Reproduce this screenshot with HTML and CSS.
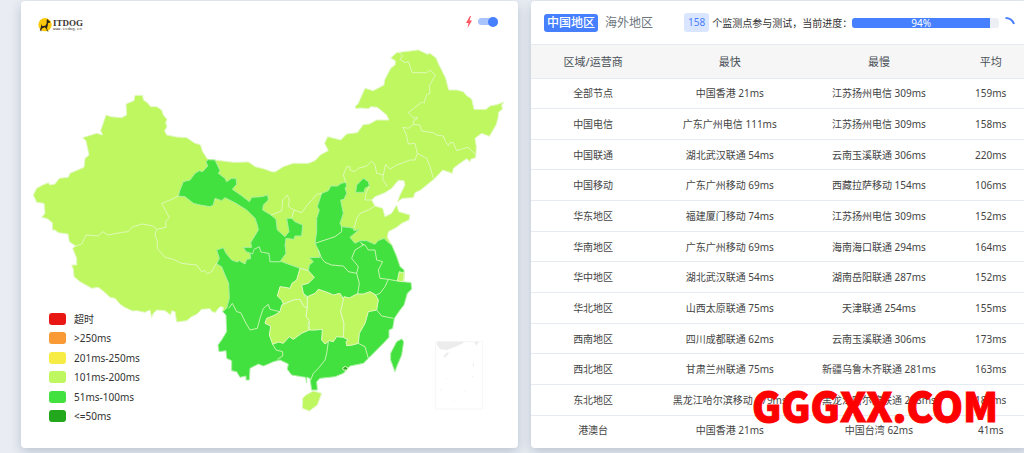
FILE: index.html
```html
<!DOCTYPE html>
<html lang="zh-CN">
<head>
<meta charset="utf-8">
<title>ITDOG</title>
<link rel="stylesheet" href="styles.css">
</head>
<body>
<main class="page">
  <section class="card map-card">
    <header class="map-head">
      <a class="logo" href="#">
        <svg class="logo-mark" viewBox="0 0 42 42" aria-hidden="true">
          <circle cx="21" cy="20" r="20" fill="#fbc90c"/>
          <path d="M4 41l3-9 2-6 1-9 2 7 10-1 4-7 0-9 3-4 2 4 6 4-2 3-5 1-1 9-2 6 2 8 4 2h-6l-2-8-5-4-7 3-3 4v5l-3-1v-5z" fill="#2b2317"/>
        </svg>
        <span class="logo-text"><span class="logo-name">ITDOG</span><span class="logo-url">www.itdog.cn</span></span>
      </a>
      <label class="fast">
        <svg class="bolt" viewBox="0 0 8 12" aria-hidden="true"><path d="M5 0L1 7h2.500L2.500 12 7 4.500H4.500L6 0z" fill="#ff5560"/></svg>
        <input class="switch" type="checkbox" checked aria-label="快速">
      </label>
    </header>
    <svg class="map" viewBox="63 126 1491 1125" role="img" aria-label="中国地图">
      <path class="ok" d="M405 286H428L430 300 442 308 452 320 470 320 485 330 490 345 501 358 497 368 501 380 494 392 500 405 530 411 560 413 585 430 601 434 608 455 623 478 645 480 700 487 745 486 760 496 765 500 790 506 815 515 825 516 850 500 880 490H925L945 482 962 464 985 452 974 430 983 410 1022 420 1040 402 1072 398 1090 374 1108 372 1130 360H1167L1160 345 1132 322 1112 320 1106 326 1082 324 1068 326 1066 318 1074 312 1095 265 1120 272 1152 255 1154 240 1172 205 1185 195 1186 182 1172 174 1190 158 1255 150 1283 163 1290 160 1308 174 1317 195 1325 210 1337 235 1346 270 1370 270 1390 275 1400 287 1415 297 1422 328H1458L1470 318 1490 314 1512 306 1505 315 1507 328 1496 336 1494 355 1488 375 1478 392 1468 409 1445 400 1425 415 1429 440 1427 473 1412 478 1410 485 1400 476 1380 490 1360 505 1357 520 1328 510 1305 535 1262 570 1245 578 1240 593 1208 595 1193 605 1200 585 1215 555 1212 542 1195 541 1175 565 1155 578 1125 590 1115 600 1125 618 1148 625 1155 650 1175 640 1190 615 1196 635 1230 645 1227 660 1205 670 1190 682 1165 695 1162 712 1175 735 1190 770 1200 800 1213 812V840L1150 900 1000 1010 800 960 668 935 670 922 660 920 645 938 635 934 630 926 605 928 590 943 575 950 560 962 530 966 525 935 515 932 512 945 495 932 470 930 460 940 455 953 450 930 435 937 410 932 398 933 385 927 372 921 360 912 345 895 330 892 312 875 295 862 275 865 240 845 222 830 220 808 215 795 230 795V775L218 745 227 738 208 725 204 702 175 698 165 690 157 690V668L142 656 125 652 135 640 132 610 110 607 100 585 110 565 128 555 145 548 150 555 165 552 178 535 205 532 210 520 252 502 255 475 267 465 258 422 248 413 290 400 308 405 302 392 318 345 332 350 365 353 380 345 378 312 402 302z"/>
      <path class="good" d="M650 750L670 743 678 760 695 780 712 786 718 782 735 792 740 778 752 776 750 762 762 748 778 740 783 756 807 760 810 785 845 785 900 805 925 812 928 795 940 785 928 773 960 772 955 750 945 730 950 695V655L958 630 952 620 965 580 985 572 992 558 1012 558 1024 550 1037 547 1040 560 1035 563 1040 580 1032 598 1022 600 1030 640 1020 670 1025 680 1045 682 1060 685 1062 692 1078 688 1064 700 1050 712 1065 730 1080 722 1100 722 1125 733 1134 722 1152 715 1162 725 1175 735 1190 770 1200 800 1212 810 1208 845 1233 848 1235 867 1222 880 1212 915 1200 930 1183 955 1178 985 1167 990V1012L1150 1030 1115 1065 1105 1075 1090 1090 1050 1098 1030 1120 1005 1130 960 1135 950 1145 952 1170H935L930 1135 920 1132V1148L917 1132 905 1130 875 1125 862 1108 865 1092 840 1080 820 1085 805 1092 790 1098 775 1092 750 1105 748 1140H738V1128L720 1132 710 1115 695 1112V1082L680 1075 678 1052 657 1055 654 1035 665 1020 680 995 678 945 668 935 680 925 688 895 686 850 675 825 665 800 650 792 658 775z"/>
      <path class="good" d="M645 480L660 512 655 520 675 535 680 545 695 535 708 535 710 553 697 568 725 587 748 605 755 592 785 590 803 585 805 600 790 615 788 630 813 645 828 658 832 690 855 710 867 695 860 655 875 655 885 665 908 675 905 708 885 708 882 718 858 715 855 735 858 760 840 785H810L807 760 783 756 778 740 762 748 758 762 738 755 730 742 755 742 752 728 775 690 772 675 765 655 740 630 708 610 675 593 665 602 645 595 640 615 630 620 600 615 580 610 555 590 535 588 540 570 550 545 570 540 585 520 598 512 608 515 623 498 618 485 624 479z"/>
      <path class="ok" d="M900 805L925 812 943 832 925 850 905 855 910 880 922 895V925L910 918 900 898 880 900 850 912 845 900 832 888 840 860 855 862 870 865 876 850 890 840z"/>
      <path class="ok" d="M845 915L880 900 900 898 910 918 922 925 918 950 928 962 924 975 927 990 905 1000 880 1018 868 1010 850 1030 835 1026 818 1033 808 1005 812 978 795 970 800 955 825 945 840 935z"/>
      <path class="ok" d="M922 890L945 880 955 868 985 878 1000 885 1020 880 1032 900 1022 935 1032 970 1030 1012 1010 1010 1000 1025 988 1022 975 1032 965 1020 967 988 945 990 927 990 928 962 918 950 922 925z"/>
      <path class="ok" d="M1032 890L1048 894 1070 882 1090 882 1110 875 1126 884 1135 900 1130 930 1105 935 1095 970 1078 1000 1075 1030 1058 1035 1040 1037 1038 1025 1045 1020 1030 1012 1032 970 1022 935z"/>
      <path class="ok" d="M1198 815L1213 820 1210 845 1192 843z"/>
      <path class="ok" d="M918 1185L940 1173 965 1180 952 1215 928 1233 907 1225 908 1195z"/>
      <path class="good" d="M1205 1017L1211 1025 1205 1065 1190 1100 1185 1115 1172 1080V1060L1190 1025z"/>
      <path class="good" d="M1090 535L1105 545 1108 558 1095 565 1092 577H1067L1070 555z"/>
      <path class="best" d="M1028 1104L1036 1099 1044 1104 1042 1110H1030z"/>
      <path class="edge" d="M227 738L245 732 258 705 295 708 308 695 325 705 365 697 385 695 395 682 425 672 460 678 470 688 498 682 497 665 508 653 497 632 485 610 510 600 535 588"/>
      <path class="edge" d="M470 688L465 705 472 725V745L495 772 520 778 545 790 570 793 590 795 605 815 615 811 622 821 635 815 640 805 650 790"/>
      <path class="edge" d="M813 645L845 633 848 600 862 585 868 600 865 620 882 630 905 638 922 615 950 583 965 580M882 630L875 655"/>
      <path class="edge" d="M1037 547L1030 525 1040 500 1050 500V510L1063 515 1075 505 1100 498 1115 483 1125 495 1130 520 1150 525 1157 493 1170 508 1190 495 1210 488 1230 480 1245 480 1252 460 1245 430 1225 432 1218 400 1208 382 1225 385 1240 373 1260 375 1265 393 1300 398 1310 405 1330 408 1335 422 1345 437 1350 428 1360 428 1370 452 1385 447 1405 442 1425 462"/>
      <path class="edge" d="M1240 373L1242 360 1250 358 1252 352 1240 354 1225 338 1245 322 1267 305 1272 310 1280 284 1290 280 1288 258 1306 225 1290 210 1280 218H1237L1225 185 1215 188 1200 178 1208 168 1198 158M1252 460L1280 475 1290 500 1300 535M1150 525L1148 537 1162 560M1125 618L1105 630 1080 640 1070 655 1062 685M1108 558L1098 580 1095 600 1115 600"/>
      <path class="edge" d="M945 730L975 720 1005 710 1025 695V680M955 750L965 775 975 787 995 795 1030 798 1045 815 1070 820M1080 725L1090 735 1065 750 1055 775 1075 800 1070 820 1078 850 1073 882M1085 732L1095 735 1105 750 1125 750 1130 780 1148 785 1135 810 1140 835 1165 838 1192 843M1165 838L1155 860 1140 880 1125 886M1130 930L1145 948 1180 955M1075 1030L1095 1040 1105 1075M985 1025L980 1060 975 1080 955 1105 940 1120 932 1140M818 1033L828 1050 848 1055V1068L832 1078M910 880L925 892M686 925L697 910 710 935 722 938 738 970 750 990 772 985 780 955 790 925 805 913 810 928 840 935"/>
      <path class="inset" d="M1307 1025H1447V1227H1307z"/>
      <path class="isles" d="M1309 1030L1314 1025H1396L1372 1038 1340 1050 1320 1048zM1422 1025h13l-5 13zM1331 1068l8-10 8-1-6 10-8 6zM1420 1086l2 10-2 5-2-5zM1414 1134l5-7 2 2-6 6zM1391 1178l6-8 1 2zM1321 1165l4 6-2 2zM1337 1138l5-5-1 4zM1358 1205l6-3-2 4zM1440 1045l3-4z"/>
    </svg>
    <ul class="legend">
      <li><i class="sw timeout"></i>超时</li>
      <li><i class="sw slow"></i>&gt;250ms</li>
      <li><i class="sw fair"></i>201ms-250ms</li>
      <li><i class="sw mid"></i>101ms-200ms</li>
      <li><i class="sw quick"></i>51ms-100ms</li>
      <li><i class="sw top"></i>&lt;=50ms</li>
    </ul>
  </section>

  <section class="card data-card">
    <header class="data-head">
      <nav class="tabs">
        <button class="tab active" type="button">中国地区</button>
        <button class="tab" type="button">海外地区</button>
      </nav>
      <div class="status">
        <span class="count">158</span>
        <span class="status-text">个监测点参与测试，当前进度：</span>
        <div class="progress" role="progressbar" aria-label="当前进度" aria-valuenow="94" aria-valuemin="0" aria-valuemax="100"><div class="bar" style="width:94%">94%</div></div>
        <svg class="spinner" viewBox="0 0 12 14" aria-hidden="true"><path d="M1.500 2A9 9 0 0 1 10 8" fill="none" stroke="#467fff" stroke-width="2"/></svg>
      </div>
    </header>
    <table class="results">
      <thead><tr><th class="c1">区域/运营商</th><th class="c2">最快</th><th class="c3">最慢</th><th class="c4">平均</th></tr></thead>
      <tbody>
        <tr><td>全部节点</td><td>中国香港 21ms</td><td>江苏扬州电信 309ms</td><td>159ms</td></tr>
        <tr><td>中国电信</td><td>广东广州电信 111ms</td><td>江苏扬州电信 309ms</td><td>158ms</td></tr>
        <tr><td>中国联通</td><td>湖北武汉联通 54ms</td><td>云南玉溪联通 306ms</td><td>220ms</td></tr>
        <tr><td>中国移动</td><td>广东广州移动 69ms</td><td>西藏拉萨移动 154ms</td><td>106ms</td></tr>
        <tr><td>华东地区</td><td>福建厦门移动 74ms</td><td>江苏扬州电信 309ms</td><td>152ms</td></tr>
        <tr><td>华南地区</td><td>广东广州移动 69ms</td><td>海南海口联通 294ms</td><td>164ms</td></tr>
        <tr><td>华中地区</td><td>湖北武汉联通 54ms</td><td>湖南岳阳联通 287ms</td><td>152ms</td></tr>
        <tr><td>华北地区</td><td>山西太原联通 75ms</td><td>天津联通 254ms</td><td>155ms</td></tr>
        <tr><td>西南地区</td><td>四川成都联通 62ms</td><td>云南玉溪联通 306ms</td><td>173ms</td></tr>
        <tr><td>西北地区</td><td>甘肃兰州联通 75ms</td><td>新疆乌鲁木齐联通 281ms</td><td>163ms</td></tr>
        <tr><td>东北地区</td><td>黑龙江哈尔滨移动 179ms</td><td>黑龙江哈尔滨联通 298ms</td><td>182ms</td></tr>
        <tr><td>港澳台</td><td>中国香港 21ms</td><td>中国台湾 62ms</td><td>41ms</td></tr>
      </tbody>
    </table>
    <div class="watermark">GGGXX.COM</div>
  </section>
</main>
</body>
</html>
```
FILE: styles.css
```css
* { box-sizing: border-box; }

body {
  margin: 0;
  background: #e9edf3;
  color: #495057;
  font-family: "Noto Sans", "Noto Sans CJK SC", sans-serif;
  font-size: 10px;
  overflow-x: hidden;
}

.page {
  min-height: 100vh;
  display: grid;
  grid-template-columns: 497fr 497fr;
  gap: 13px;
  padding: 1px 0 5px 21px;
  margin-right: -4px;
}

.card {
  position: relative;
  display: flex;
  flex-direction: column;
  min-width: 0;
  background: #fff;
  border-radius: 4px;
  box-shadow: 0 4px 12px rgba(120, 135, 160, .4);
}

.map-head {
  display: flex;
  justify-content: space-between;
  align-items: center;
  height: 41px;
  padding: 6px 20px 0 17px;
}

.logo { display: flex; align-items: center; gap: 1px; color: #40342f; text-decoration: none; }
.logo-mark { width: 14px; height: 14px; }
.logo-text { display: flex; flex-direction: column; padding-top: 1px; }
.logo-name { font: bold 9px/8px "Liberation Serif", serif; }
.logo-url { font: 4px/4px "Liberation Mono", monospace; }

.fast { display: flex; align-items: center; gap: 5px; height: 12px; margin-bottom: 6px; }
.bolt { width: 8px; height: 12px; }

.switch {
  appearance: none;
  display: flex;
  align-items: center;
  justify-content: flex-end;
  width: 20px;
  height: 7px;
  margin: 0;
  border-radius: 4px;
  background: #a9c3fd;
}
.switch::after { content: ""; width: 10px; height: 10px; flex: none; border-radius: 50%; background: #467fff; }

.map { display: block; width: 100%; }
.map path { stroke: #e3f9c4; stroke-width: 3; stroke-linejoin: round; }
.map .ok { fill: #bff761; }
.map .good { fill: #42e13f; stroke: #a9f0a0; }
.map .best { fill: #23a81d; }
.map .edge { fill: none; stroke: #e5facb; stroke-opacity: .8; }
.map .inset { fill: none; stroke: #f6f6f6; }
.map .isles { fill: #ececec; stroke: none; }

.legend {
  position: absolute;
  left: 28px;
  bottom: 22px;
  display: grid;
  grid-auto-rows: 1fr;
  height: 117px;
  margin: 0;
  padding: 0;
  list-style: none;
  color: #333;
}
.legend li { display: flex; align-items: center; gap: 8px; line-height: 12px; }
.sw { width: 17px; height: 12px; border-radius: 3px; }
.timeout { background: #e81714; }
.slow { background: #f99a36; }
.fair { background: #f6ec45; }
.mid { background: #bff761; }
.quick { background: #42e13f; }
.top { background: #23a81d; }

.data-head {
  display: flex;
  align-items: center;
  justify-content: space-between;
  gap: 28px;
  height: 44px;
  padding: 0 12px 0 13px;
  border-bottom: 1px solid #e6ebf1;
}
.tabs { display: flex; flex: none; gap: 4px; }
.tab {
  height: 18px;
  padding: 0 3px;
  border: 0;
  border-radius: 3px;
  background: none;
  color: #6c757d;
  font: 12px/18px "Noto Sans", "Noto Sans CJK SC", sans-serif;
}
.tab.active { background: #467fff; color: #fff; font-weight: 500; }

.status { display: flex; flex: 1; align-items: center; color: #333; }
.count {
  padding: 0 4px;
  border-radius: 3px;
  background: #dae5ff;
  color: #467fff;
  line-height: 19px;
}
.status-text { flex: none; margin-left: 3px; }
.progress { flex: 1; border-radius: 3px; background: #eceff3; }
.bar { border-radius: 3px 0 0 3px; background: #467fff; color: #fff; line-height: 10px; text-align: center; }
.spinner { flex: none; width: 12px; height: 14px; margin-left: 5px; }

.results {
  flex: 1;
  width: 100%;
  margin-bottom: 3px;
  border-collapse: collapse;
  table-layout: fixed;
  text-align: center;
}
.results th {
  height: 33px;
  padding: 0;
  background: #f6f6f6;
  color: #495057;
  font-size: 11px;
  font-weight: 400;
}
.results td { padding: 0; border-top: 1px solid #e6ebf1; color: #444; line-height: 14px; white-space: nowrap; }
.c1 { width: 25%; }
.c2 { width: 30%; }
.c3 { width: 30%; }
.c4 { width: 15%; }

.watermark {
  position: absolute;
  right: 30px;
  bottom: 19px;
  color: #f00;
  font: 900 40px/48px "Noto Sans CJK SC", sans-serif;
  -webkit-text-stroke: 1px #f00;
}
```
